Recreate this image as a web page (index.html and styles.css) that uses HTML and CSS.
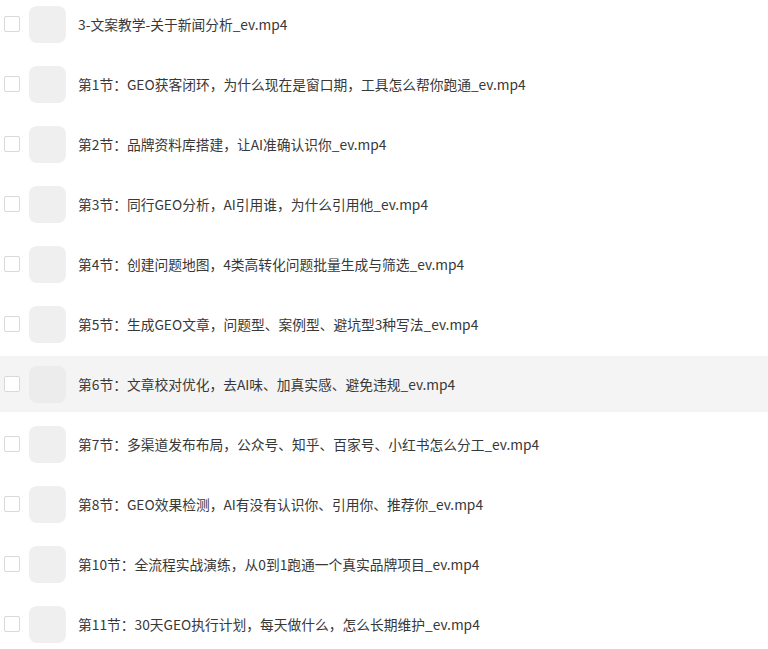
FILE: index.html
```html
<!DOCTYPE html>
<html lang="zh">
<head>
<meta charset="utf-8">
<link rel="stylesheet" href="styles.css">
</head>
<body>
<ul class="list">
  <li class="row"><span class="check"></span><span class="thumb"></span><span class="name">3-文案教学-关于新闻分析_ev.mp4</span></li>
  <li class="row"><span class="check"></span><span class="thumb"></span><span class="name">第1节：GEO获客闭环，为什么现在是窗口期，工具怎么帮你跑通_ev.mp4</span></li>
  <li class="row"><span class="check"></span><span class="thumb"></span><span class="name">第2节：品牌资料库搭建，让AI准确认识你_ev.mp4</span></li>
  <li class="row"><span class="check"></span><span class="thumb"></span><span class="name">第3节：同行GEO分析，AI引用谁，为什么引用他_ev.mp4</span></li>
  <li class="row"><span class="check"></span><span class="thumb"></span><span class="name">第4节：创建问题地图，4类高转化问题批量生成与筛选_ev.mp4</span></li>
  <li class="row"><span class="check"></span><span class="thumb"></span><span class="name">第5节：生成GEO文章，问题型、案例型、避坑型3种写法_ev.mp4</span></li>
  <li class="row active"><span class="check"></span><span class="thumb"></span><span class="name">第6节：文章校对优化，去AI味、加真实感、避免违规_ev.mp4</span></li>
  <li class="row"><span class="check"></span><span class="thumb"></span><span class="name">第7节：多渠道发布布局，公众号、知乎、百家号、小红书怎么分工_ev.mp4</span></li>
  <li class="row"><span class="check"></span><span class="thumb"></span><span class="name">第8节：GEO效果检测，AI有没有认识你、引用你、推荐你_ev.mp4</span></li>
  <li class="row"><span class="check"></span><span class="thumb"></span><span class="name">第10节：全流程实战演练，从0到1跑通一个真实品牌项目_ev.mp4</span></li>
  <li class="row"><span class="check"></span><span class="thumb"></span><span class="name">第11节：30天GEO执行计划，每天做什么，怎么长期维护_ev.mp4</span></li>
</ul>
</body>
</html>
```
FILE: styles.css
```css
html, body {
  margin: 0;
  padding: 0;
  background: #ffffff;
  overflow: hidden;
}
body {
  font-family: "Noto Sans CJK SC", "Noto Sans", sans-serif;
  color: #383838;
}
.list {
  list-style: none;
  margin: -4px 0 0 0;
  padding: 0;
  display: flex;
  flex-direction: column;
  gap: 4px;
}
.row {
  height: 56px;
  display: flex;
  align-items: center;
  padding-left: 4px;
}
.row.active {
  background: #f4f4f4;
}
.check {
  width: 14px;
  height: 14px;
  border: 1px solid #d9d9d9;
  border-radius: 2px;
  background: #ffffff;
  flex: none;
}
.thumb {
  width: 37px;
  height: 37px;
  border-radius: 8px;
  background: #efefef;
  margin-left: 9px;
  flex: none;
}
.row.active .thumb {
  background: #ececec;
}
.name {
  margin-left: 12px;
  font-size: 13.75px;
  line-height: 20px;
  white-space: nowrap;
}
```
